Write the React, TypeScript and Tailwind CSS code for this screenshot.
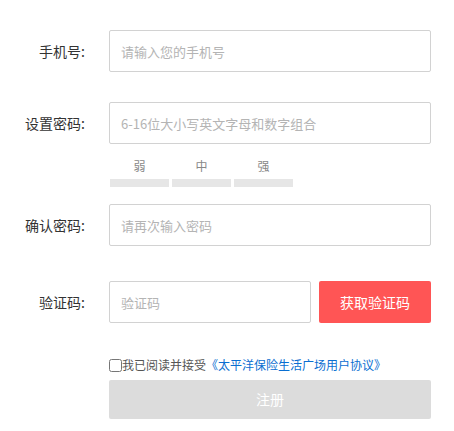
import { useState } from "react";

const font = { fontFamily: '"Noto Sans CJK SC", "Noto Sans", sans-serif' };

function Row({ label, children, className = "" }: { label: string; children: React.ReactNode; className?: string }) {
  return (
    <div className={`flex items-center h-[42px] ${className}`}>
      <label className="w-[85px] shrink-0 text-right text-[14px] text-[#333]">{label}</label>
      <div className="ml-[24px] flex flex-1 gap-2">{children}</div>
    </div>
  );
}

function Field({ placeholder, className = "" }: { placeholder: string; className?: string }) {
  return (
    <input
      placeholder={placeholder}
      className={`h-[42px] rounded-[2px] border border-[#d2d2d2] bg-white px-[11px] text-[13px] text-[#333] outline-none placeholder:text-[#b4b4b4] ${className}`}
    />
  );
}

export default function App() {
  const [agreed, setAgreed] = useState(false);
  return (
    <div className="h-[431px] w-[454px] bg-white pt-[30px] pr-[23px]" style={font}>
      <Row label="手机号:">
        <Field placeholder="请输入您的手机号" className="w-full" />
      </Row>
      <Row label="设置密码:" className="mt-[30px]">
        <Field placeholder="6-16位大小写英文字母和数字组合" className="w-full placeholder:text-[#9a9a9a]" />
      </Row>

      <div className="ml-[110px] mt-[14px]">
        <div className="flex gap-[3px] text-[12px] leading-[16px] text-[#888]">
          {["弱", "中", "强"].map((s) => (
            <span key={s} className="w-[59px] text-center">
              {s}
            </span>
          ))}
        </div>
        <div className="mt-[5px] flex gap-[3px]">
          {[0, 1, 2].map((i) => (
            <span key={i} className="h-[8px] w-[59px] bg-[#e6e6e6]" />
          ))}
        </div>
      </div>

      <Row label="确认密码:" className="mt-[17px]">
        <Field placeholder="请再次输入密码" className="w-full" />
      </Row>
      <Row label="验证码:" className="mt-[35px]">
        <Field placeholder="验证码" className="w-[202px]" />
        <button className="h-[42px] flex-1 rounded-[2px] bg-[#ff5555] text-[14px] text-white">获取验证码</button>
      </Row>

      <div className="ml-[109px] mt-[35px] flex items-center text-[12px] leading-[14px]">
        <input
          type="checkbox"
          checked={agreed}
          onChange={() => setAgreed(!agreed)}
          className="m-0 h-[13px] w-[13px]"
        />
        <span className="text-[#555]">我已阅读并接受</span>
        <a href="#" className="text-[#0a6ed1]">
          《太平洋保险生活广场用户协议》
        </a>
      </div>
      <button className="ml-[109px] mt-[8px] h-[39px] w-[322px] rounded-[2px] bg-[#dcdcdc] text-[14px] text-white">
        注册
      </button>
    </div>
  );
}
